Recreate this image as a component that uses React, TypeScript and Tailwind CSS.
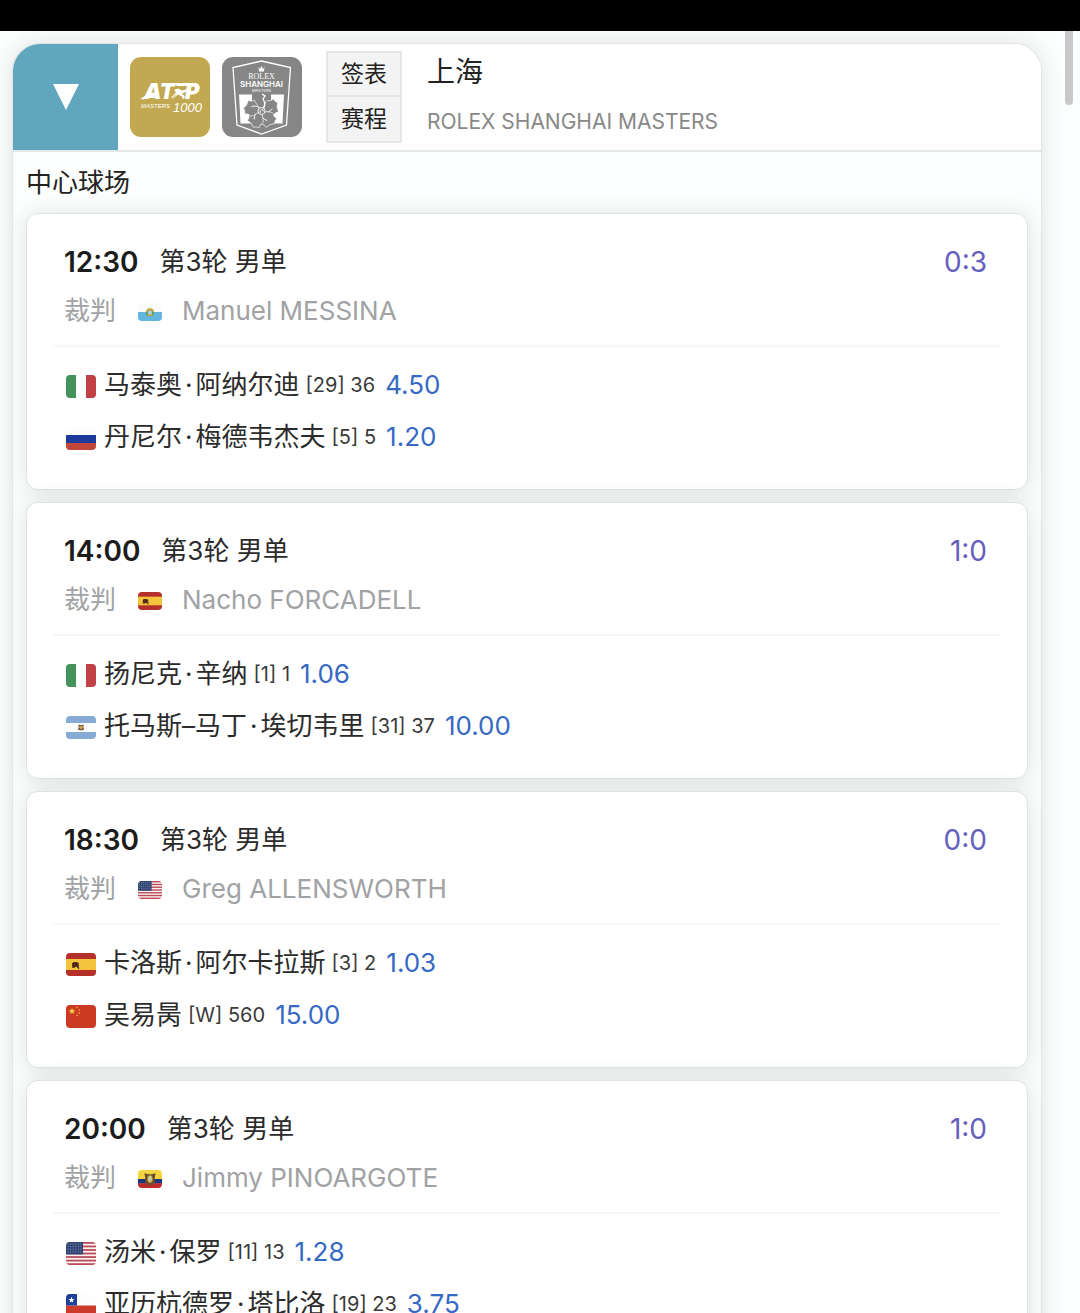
import { Fragment, useState } from "react";

type FlagCode = "it" | "ru" | "es" | "ar" | "us" | "cn" | "cl" | "sm" | "ec";

interface Player {
    flag: FlagCode;
    name: string;
    seed: string;
    rank: string;
    odds: string;
}

interface Match {
    time: string;
    round: string;
    score: string;
    umpire: { flag: FlagCode; name: string };
    players: Player[];
}

const matches: Match[] = [
    {
        time: "12:30",
        round: "第3轮 男单",
        score: "0:3",
        umpire: { flag: "sm", name: "Manuel MESSINA" },
        players: [
            { flag: "it", name: "马泰奥·阿纳尔迪", seed: "29", rank: "36", odds: "4.50" },
            { flag: "ru", name: "丹尼尔·梅德韦杰夫", seed: "5", rank: "5", odds: "1.20" },
        ],
    },
    {
        time: "14:00",
        round: "第3轮 男单",
        score: "1:0",
        umpire: { flag: "es", name: "Nacho FORCADELL" },
        players: [
            { flag: "it", name: "扬尼克·辛纳", seed: "1", rank: "1", odds: "1.06" },
            { flag: "ar", name: "托马斯–马丁·埃切韦里", seed: "31", rank: "37", odds: "10.00" },
        ],
    },
    {
        time: "18:30",
        round: "第3轮 男单",
        score: "0:0",
        umpire: { flag: "us", name: "Greg ALLENSWORTH" },
        players: [
            { flag: "es", name: "卡洛斯·阿尔卡拉斯", seed: "3", rank: "2", odds: "1.03" },
            { flag: "cn", name: "吴易昺", seed: "W", rank: "560", odds: "15.00" },
        ],
    },
    {
        time: "20:00",
        round: "第3轮 男单",
        score: "1:0",
        umpire: { flag: "ec", name: "Jimmy PINOARGOTE" },
        players: [
            { flag: "us", name: "汤米·保罗", seed: "11", rank: "13", odds: "1.28" },
            { flag: "cl", name: "亚历杭德罗·塔比洛", seed: "19", rank: "23", odds: "3.75" },
        ],
    },
];

// Every flag is drawn on a 30x23 canvas
const flagArt: Record<FlagCode, React.ReactNode> = {
    it: (
        <>
            <rect width="30" height="23" fill="#fdfdfd" />
            <rect width="10" height="23" fill="#43935a" />
            <rect x="20" width="10" height="23" fill="#c04046" />
        </>
    ),
    ru: (
        <>
            <rect width="30" height="23" fill="#fdfdfd" />
            <rect y="8" width="30" height="8" fill="#1b3a9c" />
            <rect y="16" width="30" height="7" fill="#c2463a" />
        </>
    ),
    es: (
        <>
            <rect width="30" height="23" fill="#b5302a" />
            <rect y="6" width="30" height="11" fill="#f3c43c" />
            <path d="M6 10h1V9h5v1h1v5h-2v-1H9v1H6z" fill="#7d4a22" />
            <path d="M7 10h4v3H7zM11 13l2 3" fill="#3c2418" stroke="#3c2418" />
            <path d="M8 11h1v1H8z" fill="#c23a2a" />
        </>
    ),
    ar: (
        <>
            <rect width="30" height="23" fill="#fdfdfd" />
            <rect width="30" height="7" fill="#86acd6" />
            <rect y="16" width="30" height="7" fill="#86acd6" />
            <path d="M12.500 9l5 5M17.500 9l-5 5M12 12h6M15 9v5.500" stroke="#5a3c22" strokeWidth="1.200" />
            <circle cx="15" cy="11.500" r="1.500" fill="#e6a73c" />
        </>
    ),
    us: (
        <>
            <rect width="30" height="23" fill="#fbf4f4" />
            {[0, 1, 2, 3, 4, 5, 6].map((i) => (
                <rect key={i} y={i * 3.54} width="30" height="1.77" fill="#bb4a56" />
            ))}
            <rect width="17" height="12.400" fill="#2f4674" />
            {[2, 4.6, 7.2, 9.8].map((y) => (
                <path key={y} d={`M1.500 ${y}h15`} stroke="#a7b3cc" strokeWidth=".9" strokeDasharray=".9 1.700" />
            ))}
        </>
    ),
    cn: (
        <>
            <rect width="30" height="23" fill="#cd3a24" />
            <path d="M6 2.800l.9 2.300 2.400.1-1.900 1.500.7 2.400L6 7.700 3.900 9.100l.7-2.400L2.700 5.200l2.400-.1z" fill="#f7cf45" />
            <circle cx="11" cy="2.500" r=".8" fill="#f1b53f" />
            <circle cx="13.300" cy="5" r=".8" fill="#f1b53f" />
            <circle cx="13.300" cy="8" r=".8" fill="#f1b53f" />
            <circle cx="11" cy="10.500" r=".8" fill="#f1b53f" />
        </>
    ),
    cl: (
        <>
            <rect width="30" height="23" fill="#fdfdfd" />
            <rect y="11.500" width="30" height="11.500" fill="#cb3a2b" />
            <rect width="11" height="11.500" fill="#1d3f98" />
            <path d="M5.500 2.800l.8 2.100 2.200.1-1.700 1.400.6 2.200-1.900-1.200-1.900 1.200.6-2.200L2.500 5l2.200-.1z" fill="#fff" />
        </>
    ),
    sm: (
        <>
            <rect width="30" height="23" fill="#fbfbfb" />
            <rect y="11.500" width="30" height="11.500" fill="#62b5de" />
            <circle cx="15" cy="12" r="5" fill="#6f9a4d" />
            <circle cx="15" cy="12.500" r="2.800" fill="#a9cfe0" />
            <path d="M11 11l2-3h4l2 3" fill="none" stroke="#d8a93c" strokeWidth="1.800" />
            <path d="M12 15.500h6" stroke="#d8a93c" strokeWidth="1.500" />
        </>
    ),
    ec: (
        <>
            <rect width="30" height="12" fill="#f3d63f" />
            <rect y="11.500" width="30" height="6" fill="#22347e" />
            <rect y="17" width="30" height="6" fill="#bf2a2c" />
            <path d="M8 4l5 1.500h4L22 4l-1 6v6l-4 3.500h-4L9 16v-6z" fill="#6b4f2e" />
            <ellipse cx="15" cy="11.500" rx="3.200" ry="4.800" fill="#d9b13a" />
            <ellipse cx="15" cy="11" rx="2" ry="3.200" fill="#b9cfc0" />
        </>
    ),
};

function Flag({ code, className }: { code: FlagCode; className: string }) {
    return (
        <svg viewBox="0 0 30 23" preserveAspectRatio="none" className={`shrink-0 rounded-sm ${className}`} aria-hidden="true">
            {flagArt[code]}
        </svg>
    );
}

function AtpLogo() {
    return (
        <svg viewBox="0 0 80 80" className="size-20 shrink-0" role="img" aria-label="ATP Masters 1000">
            <rect width="80" height="80" rx="11" fill="#c2a850" />
            <g fill="#fff" fontFamily="Inter, sans-serif" fontStyle="italic">
                <text x="14" y="42" fontSize="22" fontWeight="900">AT</text>
                <text x="55" y="42" fontSize="22" fontWeight="900">P</text>
                <text x="11" y="51" fontSize="6" fontWeight="500" fontFamily="Liberation Sans, Arial, sans-serif">MASTERS</text>
                <text x="43" y="55" fontSize="13" fontFamily="Liberation Sans, Arial, sans-serif">1000</text>
            </g>
            {/* swoosh left of the A, serving player between T and P */}
            <path d="M10 42l5-3h11l-2 2h-7l-3 1.500z" fill="#fff" />
            <path d="M44 26h15l-1 3h-11z" fill="#fff" />
            <path d="M44 33l4-1.500 4 2 4-1 2-2.500 1 1-2 3.500-5 2 3 3-2 3-1-3-4-2-5 4-2-1 5-5z" fill="#fff" />
            <path d="M48 30.500l4 2 4-2M46 37.500l-4 4M53 36.500l3 3" fill="none" stroke="#c2a850" strokeWidth=".9" />
        </svg>
    );
}

function ShanghaiLogo() {
    return (
        <svg viewBox="0 0 80 80" className="size-20 shrink-0" role="img" aria-label="Rolex Shanghai Masters">
            <rect width="80" height="80" rx="11" fill="#868686" />
            <path d="M39.500 4L68.500 10.500L64.500 68L39.500 77L15 68L11 10.500Z" fill="none" stroke="#fff" strokeWidth="1.300" />
            <path d="M36.500 10l1.500 2 1.500-3 1.500 3 1.500-2-.6 4.500h-4.800z" fill="#fff" />
            <g fill="#fff" textAnchor="middle">
                <text x="39.500" y="22" fontSize="8" fontFamily="Liberation Serif, serif">ROLEX</text>
                <text x="39.500" y="30" fontSize="8" fontWeight="600" fontFamily="Inter, sans-serif">SHANGHAI</text>
                <text x="39.500" y="35" fontSize="4" fontFamily="Inter, sans-serif">MASTERS</text>
            </g>
            <path d="M17 37.500H30V66.500H18.500ZM49 37.500H62L60.500 66.500H49Z" fill="#fff" />
            {[72, 144, 216, 288].map((deg) => (
                <g key={deg} transform={`translate(39.500 54) rotate(${deg})`}>
                    <path
                        d="M0 0C-4-5-8-6-8-9L-7-12L-8-15L-5-16L-3-18L1-16L6-16L6-13L8-10C5-7 3-4 0 0Z"
                        fill="#868686"
                        stroke="#fff"
                        strokeWidth=".6"
                    />
                    <path d="M1-1C4-5 3-8 1-11" fill="none" stroke="#fff" strokeWidth=".9" />
                </g>
            ))}
            <path d="M40 53C44 49 43 45 41 42L43 39L40 37" fill="none" stroke="#fff" strokeWidth="1.300" />
            <circle cx="39.500" cy="54" r="3.500" fill="#868686" stroke="#fff" strokeWidth=".9" />
            <path d="M38.500 56q-1.500-3 1-3.500t1.500 2" fill="none" stroke="#fff" strokeWidth=".8" />
        </svg>
    );
}

function PlayerName({ name }: { name: string }) {
    const parts = name.split("·");
    return (
        <span className="text-[26px] text-[#2b2b2b]">
            {parts.map((part, i) => (
                <Fragment key={i}>
                    {i > 0 && <span className="px-[3px]">·</span>}
                    {part}
                </Fragment>
            ))}
        </span>
    );
}

function MatchCard({ match }: { match: Match }) {
    return (
        <li className="rounded-xl border border-[#dce4e4] bg-white px-[26px] pt-6 pb-[26px] shadow-[0_2px_24px_rgba(40,60,60,0.14)]">
            <div className="border-b-2 border-[#f6f7f7] px-[11px] pb-[9px]">
                <div className="flex h-12 items-center">
                    <time className="text-[28px] font-semibold text-[#1c1c1c]">{match.time}</time>
                    <span className="ml-[21px] text-[26px] text-[#2b2b2b]">{match.round}</span>
                    <span className="ml-auto mr-[3px] text-[28px] text-[#6660bd]">{match.score}</span>
                </div>
                <div className="flex h-[50px] items-center text-[26px] text-[#a0a2a4]">
                    <span>裁判</span>
                    <Flag code={match.umpire.flag} className="ml-[22px] mt-0.5 h-[18px] w-6" />
                    <span className="ml-5">{match.umpire.name}</span>
                </div>
            </div>
            <ul className="px-[13px] pt-3">
                {match.players.map((player) => (
                    <li key={player.name} className="flex h-[52px] items-center">
                        <Flag code={player.flag} className="mt-0.5 mr-2 h-[23px] w-[30px]" />
                        <PlayerName name={player.name} />
                        <span className="ml-1.5 text-xl text-[#3a3a3a]">
                            [{player.seed}] {player.rank}
                        </span>
                        <span className="ml-2.5 text-[26px] text-[#3569c4]">{player.odds}</span>
                    </li>
                ))}
            </ul>
        </li>
    );
}

export default function App() {
    const [open, setOpen] = useState(true);

    return (
        <div className="relative flex h-screen flex-col overflow-hidden bg-[#fdfefe] font-[Inter,'Noto_Sans_CJK_SC',sans-serif] leading-none">
            <div className="h-[31px] shrink-0 bg-black" />
            <main className="min-h-0 flex-1 overflow-hidden pt-3 pr-[38px] pl-3">
                <section className="overflow-clip rounded-t-[28px] border border-[#e0e5e6] bg-[#fdfefe] shadow-[0_0_24px_rgba(40,60,60,0.14)]">
                    <header className="flex h-[108px] border-b-2 border-[#e3e8e9] bg-white">
                        <button
                            type="button"
                            aria-label="收起"
                            aria-expanded={open}
                            onClick={() => setOpen(!open)}
                            className="flex w-[105px] shrink-0 items-center justify-center bg-[#60a6bd]"
                        >
                            <svg viewBox="0 0 26 26" className="size-[26px]">
                                <path d="M0 0H26L13 26Z" fill="#fff" />
                            </svg>
                        </button>
                        <div className="flex items-center gap-3 pl-3">
                            <AtpLogo />
                            <ShanghaiLogo />
                        </div>
                        <div className="ml-6 flex flex-col self-center text-[23px] text-[#222]">
                            <button type="button" className="h-[46px] border-2 border-[#e5e6e6] bg-[#f3f3f3] px-[13px]">
                                签表
                            </button>
                            <button type="button" className="h-[46px] border-2 border-t-0 border-[#e5e6e6] bg-[#f3f3f3] px-[13px]">
                                赛程
                            </button>
                        </div>
                        <div className="ml-[25px] flex flex-col pt-3">
                            <h1 className="h-8 text-[28px] leading-8 text-[#222]">上海</h1>
                            <p className="mt-5 text-[21px] leading-7 text-[#888]">ROLEX SHANGHAI MASTERS</p>
                        </div>
                    </header>
                    <h2 className="flex h-[61px] items-center px-[13px] text-[26px] text-[#222]">中心球场</h2>
                    {open && (
                        <ul className="flex flex-col gap-3 px-[13px] pb-3">
                            {matches.map((match) => (
                                <MatchCard key={match.time} match={match} />
                            ))}
                        </ul>
                    )}
                </section>
            </main>
            <div className="absolute top-[31px] right-[7px] h-[74px] w-2 rounded-b-full bg-[#c9c9c9]" />
        </div>
    );
}
